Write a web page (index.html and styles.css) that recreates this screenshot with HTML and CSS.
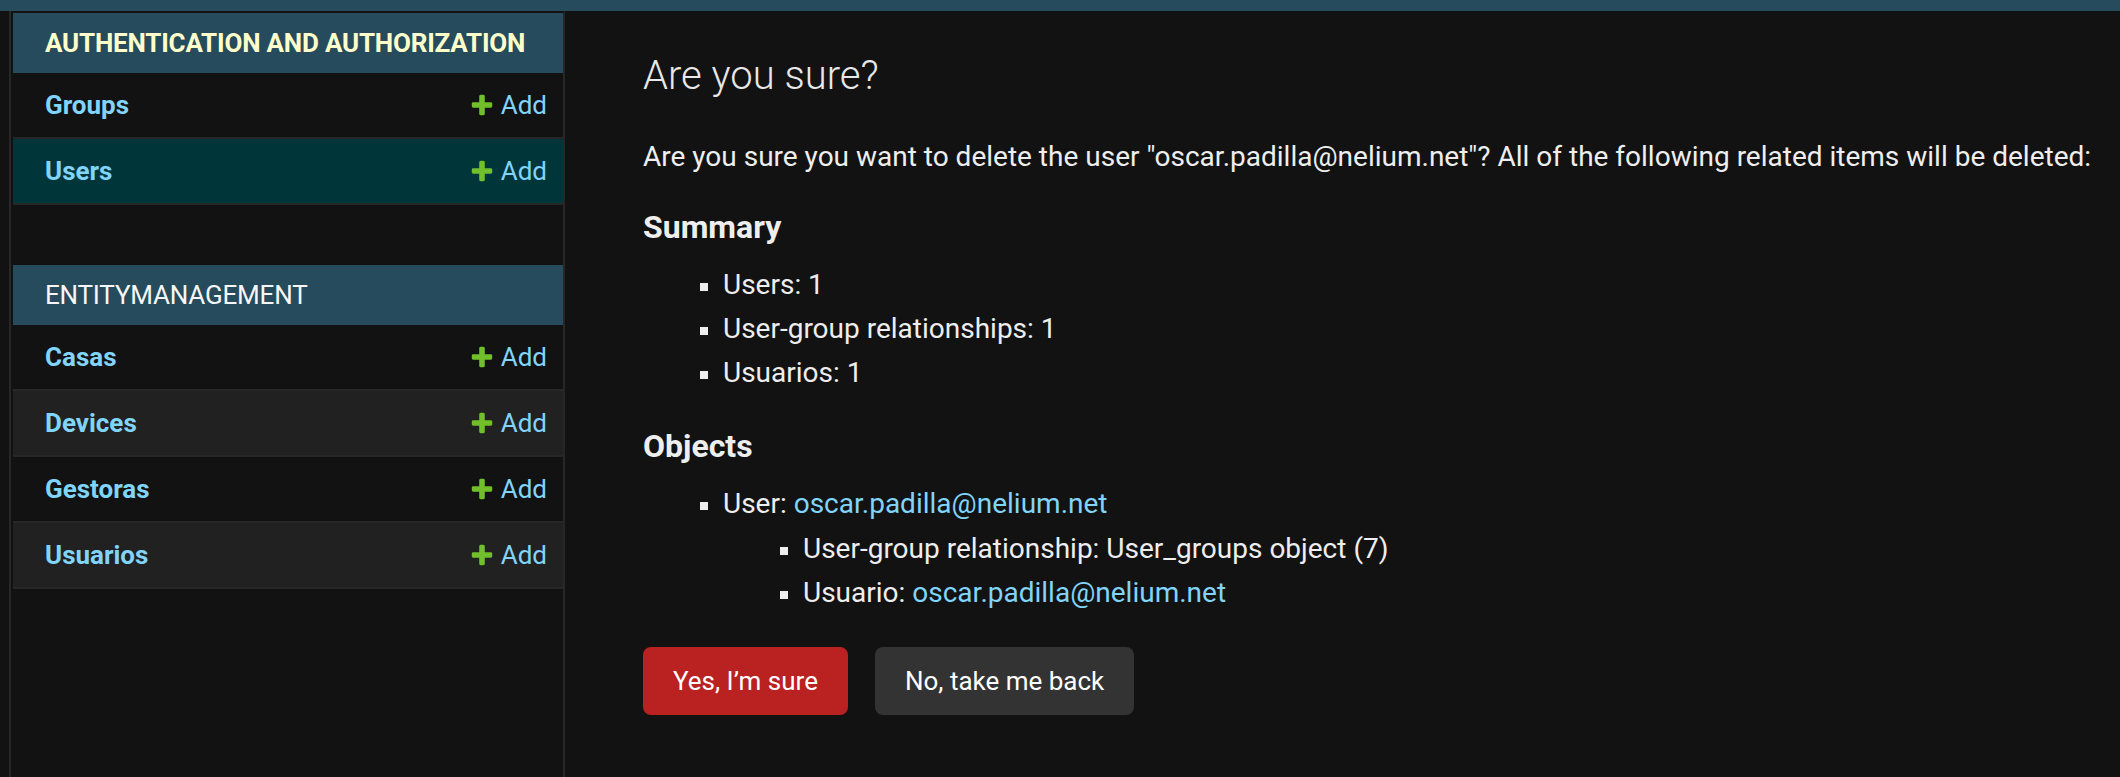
FILE: index.html
```html
<!DOCTYPE html>
<html lang="en">
<head>
<meta charset="utf-8">
<title>Are you sure?</title>
<link rel="stylesheet" href="styles.css">
</head>
<body>
<div class="topbar"></div>
<div class="layout">
  <div class="toggle"></div>
  <nav class="sidebar">
    <div class="module">
      <div class="caption current">Authentication and Authorization</div>
      <div class="row"><a class="model" href="#">Groups</a><a class="addlink" href="#"><svg class="plus" viewBox="0 0 1792 1792" width="26" height="26"><path fill="#70bf2b" d="M1600 796v192q0 40-28 68t-68 28h-416v416q0 40-28 68t-68 28h-192q-40 0-68-28t-28-68v-416h-416q-40 0-68-28t-28-68v-192q0-40 28-68t68-28h416v-416q0-40 28-68t68-28h192q40 0 68 28t28 68v416h416q40 0 68 28t28 68z"/></svg>Add</a></div>
      <div class="row selected"><a class="model" href="#">Users</a><a class="addlink" href="#"><svg class="plus" viewBox="0 0 1792 1792" width="26" height="26"><path fill="#70bf2b" d="M1600 796v192q0 40-28 68t-68 28h-416v416q0 40-28 68t-68 28h-192q-40 0-68-28t-28-68v-416h-416q-40 0-68-28t-28-68v-192q0-40 28-68t68-28h416v-416q0-40 28-68t68-28h192q40 0 68 28t28 68v416h416q40 0 68 28t28 68z"/></svg>Add</a></div>
    </div>
    <div class="module">
      <div class="caption">Entitymanagement</div>
      <div class="row"><a class="model" href="#">Casas</a><a class="addlink" href="#"><svg class="plus" viewBox="0 0 1792 1792" width="26" height="26"><path fill="#70bf2b" d="M1600 796v192q0 40-28 68t-68 28h-416v416q0 40-28 68t-68 28h-192q-40 0-68-28t-28-68v-416h-416q-40 0-68-28t-28-68v-192q0-40 28-68t68-28h416v-416q0-40 28-68t68-28h192q40 0 68 28t28 68v416h416q40 0 68 28t28 68z"/></svg>Add</a></div>
      <div class="row alt"><a class="model" href="#">Devices</a><a class="addlink" href="#"><svg class="plus" viewBox="0 0 1792 1792" width="26" height="26"><path fill="#70bf2b" d="M1600 796v192q0 40-28 68t-68 28h-416v416q0 40-28 68t-68 28h-192q-40 0-68-28t-28-68v-416h-416q-40 0-68-28t-28-68v-192q0-40 28-68t68-28h416v-416q0-40 28-68t68-28h192q40 0 68 28t28 68v416h416q40 0 68 28t28 68z"/></svg>Add</a></div>
      <div class="row"><a class="model" href="#">Gestoras</a><a class="addlink" href="#"><svg class="plus" viewBox="0 0 1792 1792" width="26" height="26"><path fill="#70bf2b" d="M1600 796v192q0 40-28 68t-68 28h-416v416q0 40-28 68t-68 28h-192q-40 0-68-28t-28-68v-416h-416q-40 0-68-28t-28-68v-192q0-40 28-68t68-28h416v-416q0-40 28-68t68-28h192q40 0 68 28t28 68v416h416q40 0 68 28t28 68z"/></svg>Add</a></div>
      <div class="row alt"><a class="model" href="#">Usuarios</a><a class="addlink" href="#"><svg class="plus" viewBox="0 0 1792 1792" width="26" height="26"><path fill="#70bf2b" d="M1600 796v192q0 40-28 68t-68 28h-416v416q0 40-28 68t-68 28h-192q-40 0-68-28t-28-68v-416h-416q-40 0-68-28t-28-68v-192q0-40 28-68t68-28h416v-416q0-40 28-68t68-28h192q40 0 68 28t28 68v416h416q40 0 68 28t28 68z"/></svg>Add</a></div>
    </div>
  </nav>
  <main class="content">
    <h1 class="title">Are you sure?</h1>
    <p class="lead">Are you sure you want to delete the user "oscar.padilla@nelium.net"? All of the following related items will be deleted:</p>
    <h2 class="subhead">Summary</h2>
    <ul class="list">
      <li>Users: 1</li>
      <li>User-group relationships: 1</li>
      <li>Usuarios: 1</li>
    </ul>
    <h2 class="subhead">Objects</h2>
    <ul class="list">
      <li>User: <a href="#">oscar.padilla@nelium.net</a>
        <ul class="list nested">
          <li>User-group relationship: User_groups object (7)</li>
          <li>Usuario: <a href="#">oscar.padilla@nelium.net</a></li>
        </ul>
      </li>
    </ul>
    <div class="actions">
      <button class="btn btn-delete" type="button">Yes, I’m sure</button>
      <a class="btn btn-cancel" href="#">No, take me back</a>
    </div>
  </main>
</div>
</body>
</html>
```
FILE: styles.css
```css
html, body {
  margin: 0;
  padding: 0;
}
body {
  background: #121212;
  color: #eeeeee;
  font-family: Roboto, "Liberation Sans", Arial, sans-serif;
  height: 777px;
  overflow: hidden;
}
a {
  color: #81d4fa;
  text-decoration: none;
}
.topbar {
  height: 11px;
  background: #264b5d;
}
.layout {
  display: flex;
  min-height: 766px;
}
.toggle {
  flex: 0 0 9px;
  border-right: 2px solid #272727;
  background: #121212;
}
.sidebar {
  flex: 0 0 550px;
  padding-left: 2px;
  border-top: 2px solid transparent;
  border-right: 2px solid #272727;
  background: #121212;
}
.module {
  margin-bottom: 60px;
}
.caption {
  padding: 16px 16px 16px 32px;
  font-size: 26px;
  line-height: 28px;
  letter-spacing: -0.2px;
  text-transform: uppercase;
  font-weight: 400;
  white-space: nowrap;
  color: #f7f7f7;
  background: #264b5d;
}
.caption.current {
  color: #ffffcc;
  font-weight: 700;
  letter-spacing: -0.2px;
}
.row {
  display: flex;
  justify-content: space-between;
  align-items: center;
  padding: 16px 16px 16px 32px;
  font-size: 26px;
  line-height: 32px;
  border-bottom: 2px solid #272727;
  background: #121212;
}
.row.alt {
  background: #212121;
}
.row.selected {
  background: #00363a;
}
.model {
  font-weight: 700;
}
.addlink {
  display: flex;
  align-items: flex-start;
}
.plus {
  margin-top: 3px;
  margin-right: 6px;
  flex: 0 0 26px;
}
.content {
  flex: 1 1 auto;
  padding: 41px 10px 0 78px;
  min-width: 0;
}
.title {
  margin: 0;
  font-size: 40px;
  line-height: 48px;
  font-weight: 300;
  color: #e8e8e8;
}
.lead {
  margin: 37px 0 0;
  font-size: 28px;
  line-height: 40px;
  white-space: nowrap;
}
.subhead {
  margin: 30px 0 0;
  font-size: 32px;
  line-height: 40px;
  font-weight: 700;
  color: #eeeeee;
}
.list + .subhead {
  margin-top: 31px;
}
.list {
  list-style: none;
  margin: 16px 0 0;
  padding: 0 0 0 57px;
  font-size: 28px;
  line-height: 40px;
}
.list li {
  padding: 2px 0;
}
.list li::before {
  content: "";
  display: inline-block;
  width: 8px;
  height: 8px;
  margin-right: 15px;
  background: #eeeeee;
  vertical-align: middle;
}
.list.nested {
  margin-top: 3px;
  padding-left: 80px;
}
.actions {
  display: flex;
  gap: 27px;
  margin-top: 30px;
}
.btn {
  display: block;
  padding: 20px 30px;
  font-family: Roboto, "Liberation Sans", Arial, sans-serif;
  font-size: 26px;
  line-height: 28px;
  color: #ffffff;
  border: 0;
  border-radius: 8px;
}
.btn-delete {
  background: #ba2121;
}
.btn-cancel {
  background: #333333;
}
```
